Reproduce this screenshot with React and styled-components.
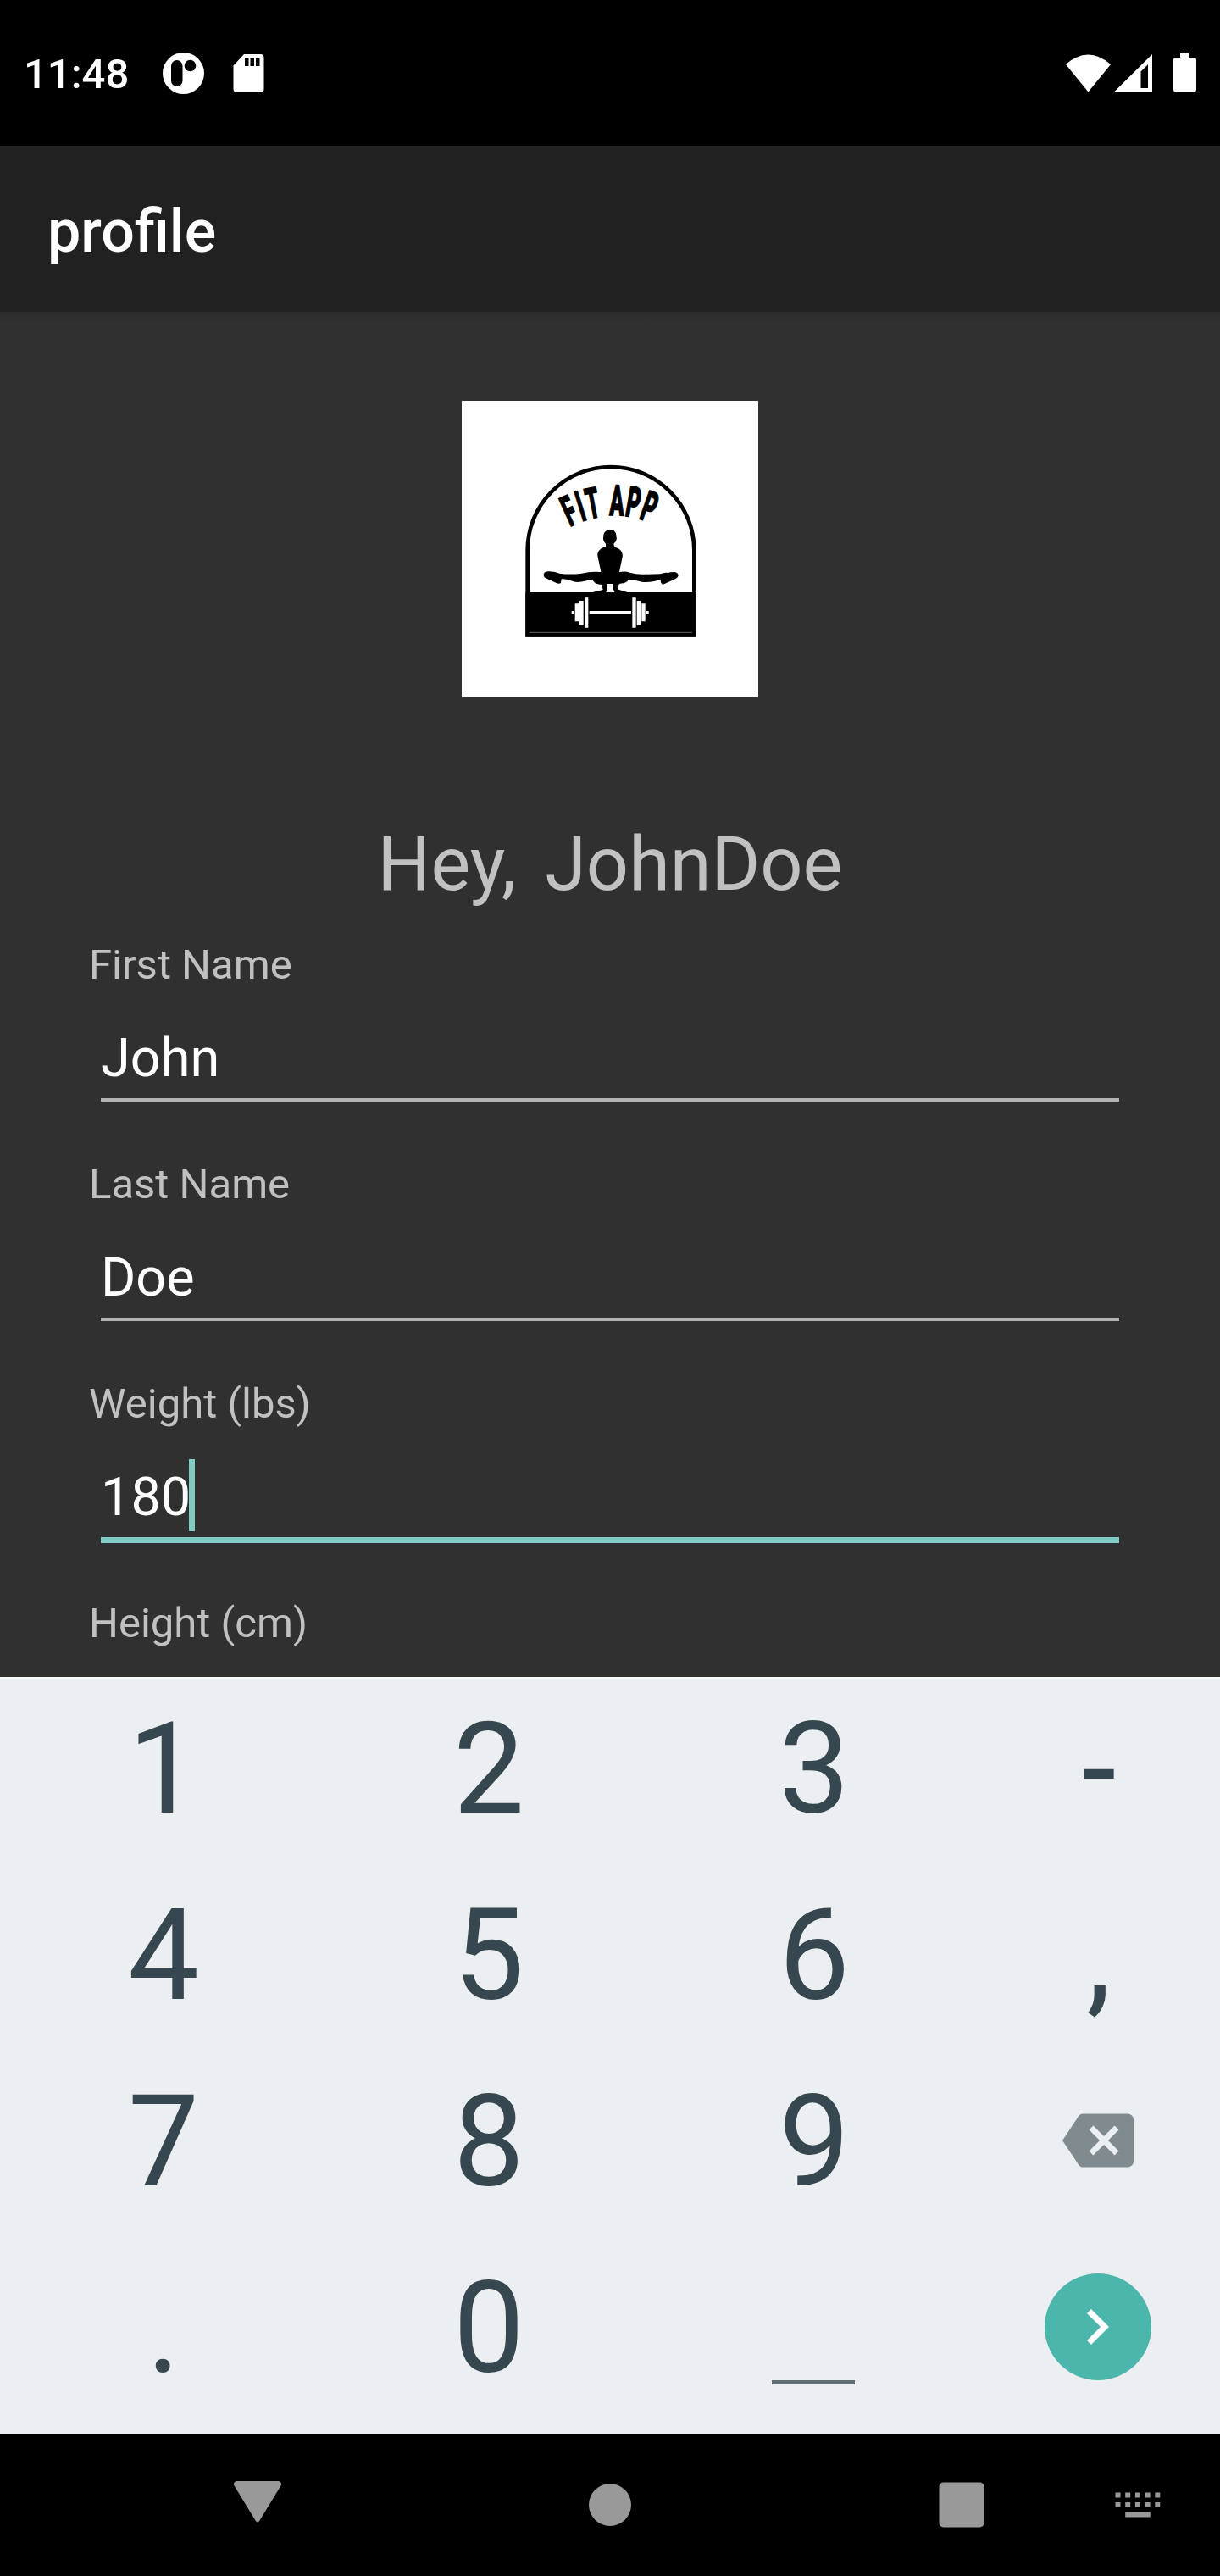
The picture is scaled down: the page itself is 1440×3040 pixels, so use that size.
import React from "react";
import styled, { createGlobalStyle } from "styled-components";

const Global = createGlobalStyle`
  * { box-sizing: border-box; }
  body { margin: 0; background: #303030; }
`;

const Screen = styled.div`
  width: 1440px;
  height: 3040px;
  display: flex;
  flex-direction: column;
  overflow: hidden;
  font-family: Roboto, "Noto Sans", sans-serif;
  background: #303030;
`;

const StatusBar = styled.header`
  height: 172px;
  flex: none;
  display: flex;
  align-items: center;
  justify-content: space-between;
  padding: 0 28px;
  background: #000;
  color: #fff;
`;

const StatusGroup = styled.div`
  display: flex;
  align-items: center;
`;

const Clock = styled.span`
  width: 164px;
  font-size: 49px;
  line-height: 58px;
  font-weight: 500;
  padding-top: 4px;
`;

const StatusIcon = styled.svg`
  display: block;
  flex: none;
  margin-left: ${(p) => p.$gap || 0}px;
`;

const AppBar = styled.div`
  height: 196px;
  flex: none;
  display: flex;
  align-items: center;
  padding: 6px 56px 0;
  background: #212121;
`;

const Title = styled.h1`
  margin: 0;
  color: #fff;
  font-size: 70px;
  line-height: 82px;
  font-weight: 500;
`;

const Content = styled.main`
  height: 1611px;
  flex: none;
  overflow: hidden;
  display: flex;
  flex-direction: column;
  padding: 105px 105px 0;
  background: linear-gradient(#2c2c2c, #303030 12px);
`;

const Logo = styled.svg`
  display: block;
  align-self: center;
  flex: none;
  background: #fff;
`;

const Greeting = styled.div`
  display: flex;
  justify-content: center;
  gap: 34px;
  margin-top: 145px;
  height: 104px;
  flex: none;
  font-size: 88.2px;
  line-height: 104px;
  color: #c1c1c1;
`;

const Form = styled.form`
  display: flex;
  flex-direction: column;
  margin-top: 38px;
`;

const Field = styled.label`
  display: flex;
  flex-direction: column;
  height: 259px;
  flex: none;
`;

const Label = styled.span`
  font-size: 49px;
  line-height: 58px;
  color: #c1c1c1;
`;

const Input = styled.span`
  display: flex;
  height: ${(p) => (p.$focused ? 103 : 100)}px;
  margin: 32px 14px 0;
  padding-top: 7px;
  border-bottom: ${(p) => (p.$focused ? "7px solid #80cbc4" : "4px solid #b4b4b4")};
  font-size: 63px;
  line-height: 84px;
  color: #fff;
`;

const Caret = styled.i`
  width: 7px;
  height: 85px;
  margin: -3px 0 0 -2px;
  background: #80cbc4;
`;

const Keypad = styled.section`
  height: 893px;
  flex: none;
  display: grid;
  grid-template-columns: 384px 384px 384px 288px;
  grid-auto-rows: 220px;
  align-content: end;
  padding-bottom: 16px;
  background: #eceff1;
  border-top: 3px solid #f8fafa;
`;

const Key = styled.button`
  display: flex;
  align-items: center;
  justify-content: center;
  padding: 0;
  border: 0;
  background: none;
  color: #37474f;
`;

const KeyText = styled.span`
  padding: 4px 0 0 2px;
  font: 400 149.5px/174px Roboto, sans-serif;
`;

const SpaceMark = styled.span`
  width: 98px;
  height: 5px;
  margin-top: 131px;
  background: #5f6c72;
`;

const NextButton = styled.span`
  width: 126px;
  height: 126px;
  border-radius: 50%;
  display: flex;
  align-items: center;
  justify-content: center;
  background: #4db6ac;
`;

const NavBar = styled.nav`
  height: 168px;
  flex: none;
  background: #000;
  display: flex;
  align-items: center;
`;

const NavIcon = styled.svg`
  display: block;
  flex: none;
  fill: #999;
  margin-left: ${(p) => p.$gap}px;
`;

const letters = [
  { char: "F", x: 398, y: 485, turn: -24.5, anchor: "start" },
  { char: "I", x: 451, y: 463, turn: -17.4, anchor: "middle" },
  { char: "T", x: 488, y: 453, turn: -11, anchor: "middle" },
  { char: "A", x: 563, y: 445, turn: 2, anchor: "middle" },
  { char: "P", x: 590, y: 446, turn: 10, anchor: "start" },
  { char: "P", x: 640, y: 456, turn: 19.5, anchor: "start" },
];

function FitLogo() {
  return (
    <Logo width="350" height="350" viewBox="15 39 1050 1050">
      <path d="M248 868V568a295 295 0 0 1 590 0V868Z" fill="#fff" stroke="#000" strokeWidth="14" />
      <rect x="241" y="717" width="604" height="158" />
      <path d="M255 859H831" stroke="#777" strokeWidth="2.5" />
      <g fontFamily="Roboto, sans-serif" fontWeight="900" fontSize="151" stroke="#000" strokeWidth="4">
        {letters.map((l) => (
          <text
            key={l.x}
            textAnchor={l.anchor}
            transform={`translate(${l.x} ${l.y}) rotate(${l.turn}) scale(.5 1)`}
          >
            {l.char}
          </text>
        ))}
      </g>
      <path d="M525 500Q540 490 554 499Q564 508 562 520Q566 528 560 538L554 544Q552 552 558 557C576 562 587 574 584 592L573 645Q595 641 610 647Q635 654 660 653L718 652Q735 645 745 648Q752 645 768 645Q781 647 782 657Q780 667 768 671L728 689Q719 688 719 671C690 682 660 683 640 677Q620 670 604 673Q602 685 575 686L568 692L570 707L600 716V720H558L550 702L551 687H528L530 702L525 720H480V716L515 708L511 690Q486 687 484 680Q480 674 470 673C430 683 420 683 400 675Q385 669 368 670L366 684Q360 689 350 684L316 668Q304 664 305 653Q308 642 325 643Q334 645 342 644L362 650Q395 655 440 650Q470 642 508 645L497 592C492 574 505 561 525 555L525 545L519 538Q514 528 517 519Q515 508 525 500Z" />
      <g fill="#fff">
        <path d="M404 783h9v12h-9zM416 757h13v63h-13zM432 747h14v84h-14zM450 736h13v106h-13zM467 783h148v12H467zM619 736h13v106h-13zM635 747h14v84h-14zM652 757h13v63h-13zM669 783h8v12h-8z" />
      </g>
    </Logo>
  );
}

const fields = [
  { label: "First Name", value: "John" },
  { label: "Last Name", value: "Doe" },
  { label: "Weight (lbs)", value: "180", focused: true },
  { label: "Height (cm)" },
];

const keys = ["1", "2", "3", "-", "4", "5", "6", ",", "7", "8", "9", "back", ".", "0", "space", "next"];

function KeyFace({ name }) {
  if (name === "back")
    return (
      <svg width="84" height="84" viewBox="0 0 24 24" fill="#808b8f">
        <path d="M22 3H7c-.69 0-1.230.35-1.590.88L0 12l5.410 8.110c.36.53.9.89 1.590.89h15c1.100 0 2-.9 2-2V5c0-1.100-.9-2-2-2zm-3 12.590L17.590 17 14 13.410 10.410 17 9 15.590 12.590 12 9 8.410 10.410 7 14 10.590 17.590 7 19 8.410 15.410 12 19 15.590z" />
      </svg>
    );
  if (name === "space") return <SpaceMark />;
  if (name === "next")
    return (
      <NextButton>
        <svg width="84" height="84" viewBox="0 0 24 24" fill="#fff">
          <path d="M10 6L8.590 7.410 13.170 12l-4.580 4.590L10 18l6-6z" transform="translate(-.3 0)" />
        </svg>
      </NextButton>
    );
  return <KeyText>{name}</KeyText>;
}

const dots = [0, 1, 2, 3, 4];

export default function App() {
  return (
    <Screen>
      <Global />
      <StatusBar>
        <StatusGroup>
          <Clock>11:48</Clock>
          <StatusIcon width="49" height="49" viewBox="0 0 49 49">
            <circle cx="24.500" cy="24.500" r="24.500" fill="#fff" />
            <rect x="10" y="9" width="13.500" height="31" rx="6.750" />
            <circle cx="32.500" cy="15.500" r="6.800" />
          </StatusIcon>
          <StatusIcon $gap={34} width="37" height="45" viewBox="0 0 37 45">
            <path d="M13 0H32.500Q36.500 0 36.500 4V41Q36.500 45 32.500 45H4.500Q.5 45 .5 41V13.500Z" fill="#fff" />
            <path d="M14 5h4.500v9H14zM20.500 5H25v9h-4.500zM27 5h4.500v9H27z" />
          </StatusIcon>
        </StatusGroup>
        <StatusGroup>
          <StatusIcon width="53" height="45" viewBox="0 0 53 45" fill="#fff">
            <path d="M0 12Q26.500-11 53 12L26.500 44.500Z" />
          </StatusIcon>
          <StatusIcon $gap={4} width="45" height="45" viewBox="0 0 45 45" fill="#fff">
            <path fillRule="evenodd" d="M45 0V44.500H0ZM40 12 31.500 20.500V40H40Z" />
          </StatusIcon>
          <StatusIcon $gap={25} width="27" height="46" viewBox="0 0 27 46" fill="#fff">
            <path d="M8 0H19V5H24Q27 5 27 8V42.500Q27 45.500 24 45.500H3Q0 45.500 0 42.500V8Q0 5 3 5H8Z" />
          </StatusIcon>
        </StatusGroup>
      </StatusBar>
      <AppBar>
        <Title>profile</Title>
      </AppBar>
      <Content>
        <FitLogo />
        <Greeting>
          <span>Hey,</span>
          <span>JohnDoe</span>
        </Greeting>
        <Form>
          {fields.map((f) => (
            <Field key={f.label}>
              <Label>{f.label}</Label>
              {f.value && (
                <Input $focused={f.focused}>
                  {f.value}
                  {f.focused && <Caret />}
                </Input>
              )}
            </Field>
          ))}
        </Form>
      </Content>
      <Keypad>
        {keys.map((k) => (
          <Key key={k} type="button">
            <KeyFace name={k} />
          </Key>
        ))}
      </Keypad>
      <NavBar>
        <NavIcon $gap={276} width="56" height="56" viewBox="0 0 56 56">
          <path d="M3 0H53Q57.500 1.500 55.500 5.500L30.500 46.500Q28 50.500 25.500 46.500L.5 5.500Q-1.500 1.500 3 0Z" />
        </NavIcon>
        <NavIcon $gap={363} width="50" height="50" viewBox="0 0 50 50">
          <circle cx="25" cy="25" r="25" />
        </NavIcon>
        <NavIcon $gap={363} width="54" height="54" viewBox="0 0 54 54">
          <rect x=".5" y=".5" width="53" height="53" rx="5" />
        </NavIcon>
        <NavIcon $gap={154} width="54" height="30" viewBox="0 0 54 30">
          {dots.map((i) => (
            <path key={i} d={`M${0.5 + i * 11.7} .5h6v6h-6zM${0.5 + i * 11.7} 12h6v6h-6z`} />
          ))}
          <rect x="12.200" y="23.500" width="29.500" height="6" />
        </NavIcon>
      </NavBar>
    </Screen>
  );
}
